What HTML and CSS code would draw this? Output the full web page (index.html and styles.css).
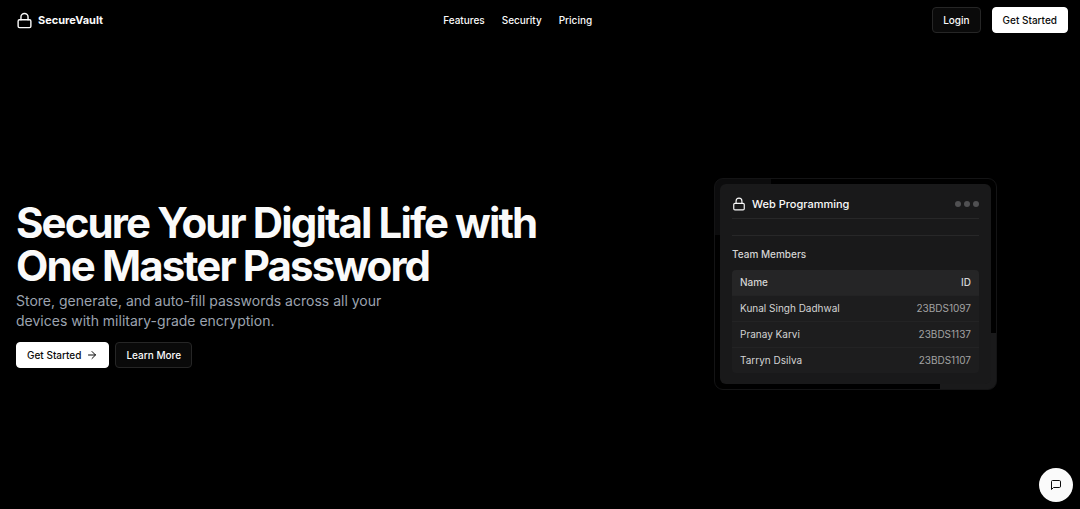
FILE: index.html
```html
<!DOCTYPE html>
<html lang="en">
<head>
  <meta charset="UTF-8" />
  <meta name="viewport" content="width=device-width, initial-scale=1.0" />
  <title>SecureVault</title>
  <link rel="stylesheet" href="styles.css">
</head>
<body>

  <header class="navbar">
    <a href="#" class="logo">
      <svg class="icon logo-icon" viewBox="0 0 24 24"><rect x="3" y="11" width="18" height="11" rx="2" /><path d="M7 11V7a5 5 0 0 1 10 0v4" /></svg>
      <span>SecureVault</span>
    </a>
    <nav class="nav-links">
      <a href="#features">Features</a>
      <a href="#security">Security</a>
      <a href="#pricing">Pricing</a>
    </nav>
    <div class="nav-actions">
      <button type="button" class="btn btn-outline">Login</button>
      <button type="button" class="btn btn-primary">Get Started</button>
    </div>
  </header>

  <main class="hero">
    <section class="hero-text">
      <h1>Secure Your Digital Life with One Master Password</h1>
      <p>Store, generate, and auto-fill passwords across all your devices with military-grade encryption.</p>
      <div class="hero-actions">
        <button type="button" class="btn btn-primary">
          Get Started
          <svg class="icon arrow-icon" viewBox="0 0 24 24"><path d="M5 12h14" /><path d="m12 5 7 7-7 7" /></svg>
        </button>
        <button type="button" class="btn btn-outline">Learn More</button>
      </div>
    </section>

    <section class="hero-card">
      <div class="card-frame">
        <div class="card">
          <div class="card-header">
            <svg class="icon card-icon" viewBox="0 0 24 24"><rect x="3" y="11" width="18" height="11" rx="2" /><path d="M7 11V7a5 5 0 0 1 10 0v4" /></svg>
            <h2>Web Programming</h2>
            <div class="dots"><span></span><span></span><span></span></div>
          </div>
          <div class="card-body">
            <h3 id="team-title">Team Members</h3>
            <table class="team" aria-labelledby="team-title">
              <thead>
                <tr><th>Name</th><th>ID</th></tr>
              </thead>
              <tbody>
                <tr><td>Kunal Singh Dadhwal</td><td>23BDS1097</td></tr>
                <tr><td>Pranay Karvi</td><td>23BDS1137</td></tr>
                <tr><td>Tarryn Dsilva</td><td>23BDS1107</td></tr>
              </tbody>
            </table>
          </div>
        </div>
      </div>
    </section>
  </main>

  <button type="button" class="chat-btn" aria-label="Open chat">
    <svg class="icon chat-icon" viewBox="0 0 24 24"><path d="M21 15a2 2 0 0 1-2 2H7l-4 4V5a2 2 0 0 1 2-2h14a2 2 0 0 1 2 2z" /></svg>
  </button>

</body>
</html>
```
FILE: styles.css
```css
* {
  box-sizing: border-box;
  margin: 0;
}
body {
  font-family: Inter, "Liberation Sans", sans-serif;
  font-size: 10px;
  background: #000;
  color: #fafafa;
}
a {
  color: inherit;
  text-decoration: none;
}
.icon {
  fill: none;
  stroke: currentColor;
  stroke-width: 2;
  stroke-linecap: round;
  stroke-linejoin: round;
  flex-shrink: 0;
}

/* navbar */
.navbar {
  display: flex;
  align-items: center;
  justify-content: space-between;
  height: 40px;
  padding: 0 12px 0 16px;
}
.logo {
  display: flex;
  align-items: center;
  gap: 5px;
  font-size: 11px;
  font-weight: 700;
}
.logo-icon {
  width: 17px;
  height: 17px;
}
.nav-links {
  display: flex;
  gap: 17px;
  font-weight: 500;
}
.nav-actions {
  display: flex;
  gap: 11px;
}

.btn {
  display: flex;
  align-items: center;
  justify-content: center;
  height: 26px;
  padding: 0 10px;
  border: 1px solid #fff;
  border-radius: 4px;
  font: inherit;
  font-weight: 500;
  cursor: pointer;
}
.btn-primary {
  background: #fff;
  color: #0a0a0a;
}
.btn-outline {
  background: #0a0a0a;
  color: #fafafa;
  border-color: #262626;
}

/* hero */
.hero {
  display: grid;
  grid-template-columns: 1fr 417px;
  align-items: center;
  min-height: calc(100vh - 40px);
  padding: 19px 16px 0;
}
h1 {
  font-size: 42px;
  line-height: 43px;
  font-weight: 700;
  letter-spacing: -0.045em;
  max-width: 560px;
}
.hero-text p {
  max-width: 400px;
  margin-top: 4px;
  font-size: 14px;
  line-height: 20px;
  color: #9ca3af;
}
.hero-actions {
  display: flex;
  gap: 6px;
  margin-top: 11px;
}
.arrow-icon {
  width: 12px;
  height: 12px;
  margin-left: 5px;
}

/* card */
.hero-card {
  display: flex;
  justify-content: center;
}
.card-frame {
  width: 283px;
  padding: 5px;
  border: 1px solid #141415;
  border-radius: 9px;
  background:
    linear-gradient(#0c0c0d, #0c0c0d) left top / 56px 56px no-repeat,
    linear-gradient(#1a1a1b, #1a1a1b) right bottom / 56px 56px no-repeat,
    #000;
}
.card {
  padding: 6px 12px 11px;
  border-radius: 6px;
  background: #19191a;
}
.card-header {
  display: flex;
  align-items: center;
  gap: 6px;
  height: 29px;
  border-bottom: 1px solid #272728;
}
.card-icon {
  width: 14px;
  height: 14px;
}
h2 {
  font-size: 11px;
  font-weight: 500;
}
.dots {
  display: flex;
  gap: 3px;
  margin-left: auto;
}
.dots span {
  width: 6px;
  height: 6px;
  border-radius: 50%;
  background: #505052;
}
.card-body {
  margin-top: 16px;
  padding-top: 11px;
  border-top: 1px solid #272728;
}
h3 {
  margin-bottom: 8px;
  font-size: 10px;
  line-height: 15px;
  font-weight: 500;
  color: #d4d4d4;
}
.team {
  width: 100%;
  border-spacing: 0;
  border-radius: 4px;
  overflow: hidden;
  background: #1d1d1e;
  line-height: 15px;
}
.team th,
.team td {
  padding: 5px 8px;
  text-align: left;
  font-weight: 400;
  color: #d4d4d4;
}
.team th {
  background: #252526;
  font-weight: 500;
}
.team td {
  border-top: 1px solid #232324;
}
.team th:last-child,
.team td:last-child {
  text-align: right;
}
.team td:last-child {
  color: #a3a3a3;
}

/* chat button */
.chat-btn {
  position: fixed;
  right: 7px;
  bottom: 7px;
  display: flex;
  align-items: center;
  justify-content: center;
  width: 34px;
  height: 34px;
  padding: 0;
  border: none;
  border-radius: 50%;
  background: #fafafa;
  color: #0a0a0a;
  cursor: pointer;
}
.chat-icon {
  width: 12px;
  height: 12px;
}
```
